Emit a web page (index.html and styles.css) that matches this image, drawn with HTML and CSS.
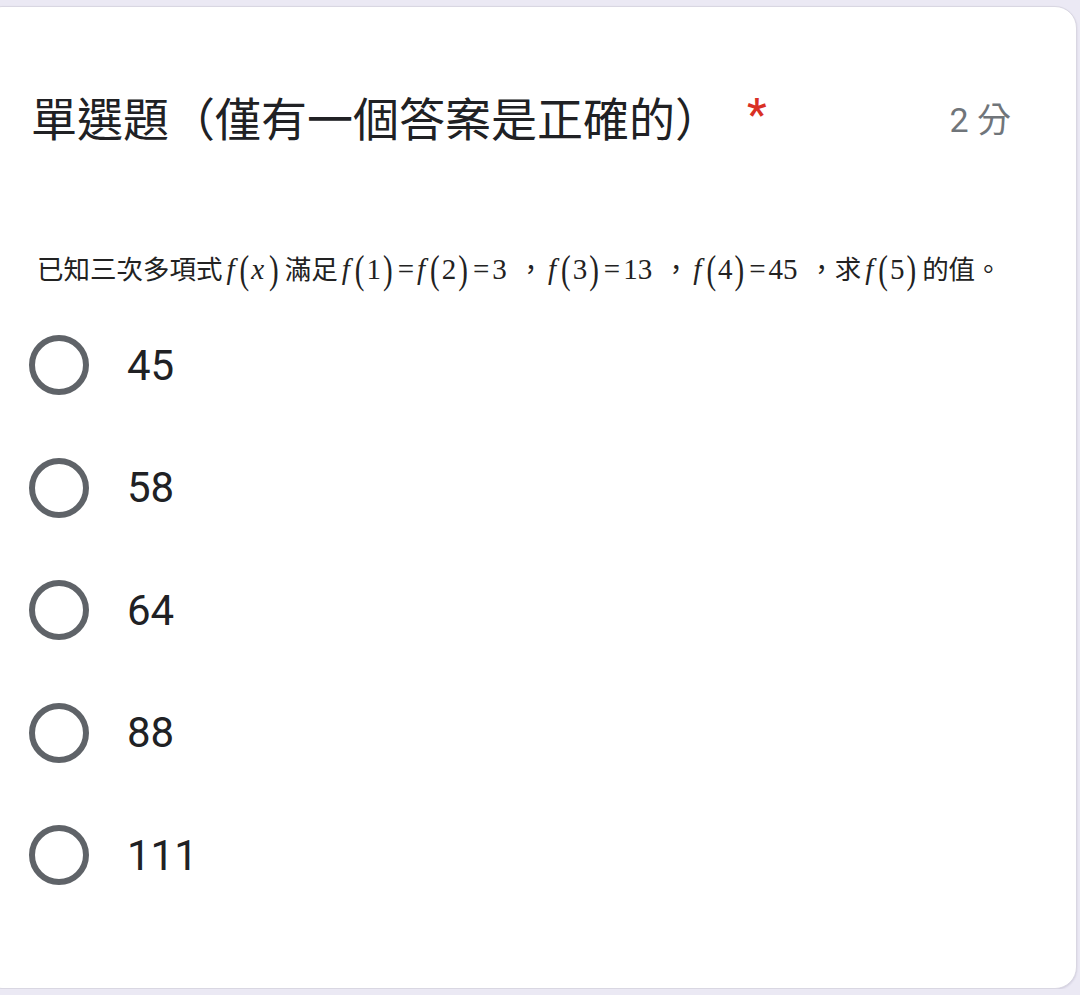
FILE: index.html
```html
<!DOCTYPE html>
<html lang="zh-Hant">
<head>
    <meta charset="UTF-8">
    <meta name="viewport" content="width=device-width, initial-scale=1.0">
    <title>單選題</title>
    <link rel="stylesheet" href="styles.css">
</head>
<body>
    <div class="card">
        <div class="header">
            <h1 class="title">單選題（僅有一個答案是正確的）<span class="required">*</span></h1>
            <div class="points">2 分</div>
        </div>

        <p class="question">已知三次多項式<span class="m"><i>f</i><span class="p">(</span><i>x</i><span class="p">)</span></span>滿足<span class="m"><i>f</i><span class="p">(</span>1<span class="p">)</span><span class="eq">=</span><i>f</i><span class="p">(</span>2<span class="p">)</span><span class="eq">=</span>3</span> ，<span class="m"><i>f</i><span class="p">(</span>3<span class="p">)</span><span class="eq">=</span>13</span> ，<span class="m"><i>f</i><span class="p">(</span>4<span class="p">)</span><span class="eq">=</span>45</span> ，求<span class="m"><i>f</i><span class="p">(</span>5<span class="p">)</span></span>的值。</p>

        <div class="options">
            <label class="option"><span class="radio"></span><span class="option-text">45</span></label>
            <label class="option"><span class="radio"></span><span class="option-text">58</span></label>
            <label class="option"><span class="radio"></span><span class="option-text">64</span></label>
            <label class="option"><span class="radio"></span><span class="option-text">88</span></label>
            <label class="option"><span class="radio"></span><span class="option-text">111</span></label>
        </div>
    </div>
</body>
</html>
```

FILE: styles.css
```css
body {
    margin: 0;
    padding: 0;
    background-color: #ebe9f4;
    font-family: Roboto, "Noto Sans CJK TC", sans-serif;
    color: #202124;
    overflow: hidden;
}

.card {
    box-sizing: border-box;
    width: 1097px;
    height: 983px;
    margin: 6px 0 0 -20px;
    padding: 85px 65px 0 50px;
    background-color: #fff;
    border: 1px solid #d9d7e2;
    border-radius: 22px;
    box-shadow: 0 1px 2px rgba(60, 50, 100, 0.15);
}

.header {
    display: flex;
    justify-content: space-between;
    align-items: center;
    height: 56px;
}

.title {
    margin: 0;
    font-size: 46px;
    font-weight: 400;
    line-height: 56px;
    letter-spacing: 0;
}

.required {
    color: #d93025;
    font-family: Roboto, sans-serif;
    font-size: 44px;
    font-weight: 500;
    line-height: 0;
    margin-left: 26px;
    vertical-align: 6px;
}

.points {
    color: #70757a;
    font-size: 34px;
    line-height: 56px;
}

.question {
    margin: 101px 0 0 6px;
    font-family: "Liberation Serif", "Noto Sans CJK TC", serif;
    font-size: 26.5px;
    line-height: 40px;
    height: 40px;
    color: #222;
    white-space: nowrap;
}

.m {
    font-family: "Liberation Serif", serif;
    font-size: 29px;
    margin: 0 4px;
}

.m i {
    margin-right: 3px;
}

.p {
    display: inline-block;
    transform: scaleY(1.4);
    margin: 0 2px;
}

.eq {
    margin: 0 3px;
}

.options {
    display: flex;
    flex-direction: column;
    margin-top: 15px;
}

.option {
    display: flex;
    align-items: center;
    height: 122.5px;
}

.radio {
    box-sizing: border-box;
    width: 60px;
    height: 60px;
    margin-left: -2px;
    border: 6px solid #5f6368;
    border-radius: 50%;
}

.option-text {
    margin-left: 38px;
    font-size: 42px;
    color: #202124;
}
```
